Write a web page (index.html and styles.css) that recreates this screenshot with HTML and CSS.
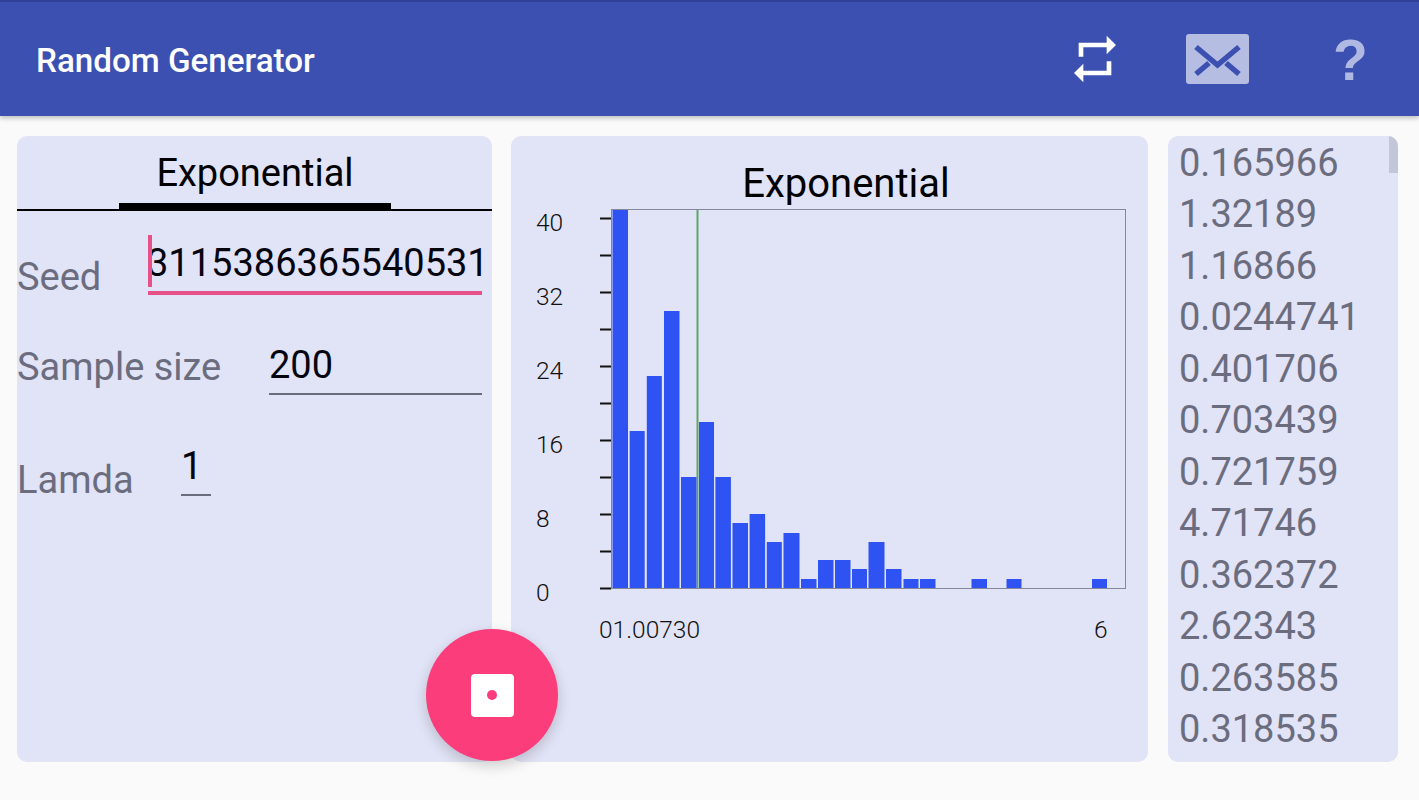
FILE: index.html
```html
<!DOCTYPE html>
<html lang="en">
<head>
    <meta charset="UTF-8">
    <meta name="viewport" content="width=device-width, initial-scale=1.0">
    <title>Random Generator</title>
    <link rel="stylesheet" href="styles.css">
</head>
<body>
    <header class="app-bar">
        <div class="app-title">Random Generator</div>
        <div class="app-actions">
            <svg class="icon-repeat" viewBox="0 0 24 24"><path d="M7 7h10v3l4-4-4-4v3H5v6h2V7zm10 10H7v-3l-4 4 4 4v-3h12v-6h-2v4z"/></svg>
            <svg class="icon-mail" viewBox="0 0 63 50">
                <rect width="63" height="50" rx="3"/>
                <path d="M10 13l21.500 18L53 13M10 40l13-11M53 40L40 29"/>
            </svg>
            <div class="icon-help">?</div>
        </div>
    </header>

    <main class="content">
        <section class="card form-card">
            <div class="tabs">
                <div class="tab">Exponential</div>
            </div>
            <div class="row row-seed">
                <div class="label">Seed</div>
                <div class="field field-focus"><span class="caret"></span><span class="value">3115386365540531</span></div>
            </div>
            <div class="row row-size">
                <div class="label">Sample size</div>
                <div class="field field-size"><span class="value">200</span></div>
            </div>
            <div class="row row-lamda">
                <div class="label">Lamda</div>
                <div class="field field-lamda"><span class="value">1</span></div>
            </div>
        </section>

        <section class="card chart-card">
            <svg class="chart" viewBox="511 136 637 626">
                <text class="chart-title" x="846" y="197">Exponential</text>

                <g class="ticks">
                    <path d="M600 218.500h11M600 255.500h11M600 292.500h11M600 329.500h11M600 366.500h11M600 403.500h11M600 440.500h11M600 477.500h11M600 514.500h11M600 551.500h11M600 588.500h11"/>
                </g>
                <g class="axis-labels">
                    <text x="536" y="231">40</text>
                    <text x="536" y="305">32</text>
                    <text x="536" y="379">24</text>
                    <text x="536" y="453">16</text>
                    <text x="536" y="527">8</text>
                    <text x="536" y="601">0</text>
                    <text x="599" y="638">01.00730</text>
                    <text x="1094" y="638">6</text>
                </g>

                <rect class="plot" x="611.500" y="209.500" width="514" height="379"/>
                <path class="mean" d="M697.500 210v378"/>

                <g class="bars">
                    <rect x="612.500" y="210" width="15.500" height="378"/>
                    <rect x="629.700" y="431" width="15" height="157"/>
                    <rect x="646.800" y="376" width="15" height="212"/>
                    <rect x="664" y="311" width="15.500" height="277"/>
                    <rect x="681" y="477" width="15.500" height="111"/>
                    <rect x="699" y="422" width="15" height="166"/>
                    <rect x="715.400" y="477" width="15.500" height="111"/>
                    <rect x="732.500" y="523" width="15.500" height="65"/>
                    <rect x="749.600" y="514" width="15.500" height="74"/>
                    <rect x="766.800" y="542" width="15" height="46"/>
                    <rect x="783.500" y="533" width="16" height="55"/>
                    <rect x="801" y="579" width="15.500" height="9"/>
                    <rect x="818" y="560" width="15.500" height="28"/>
                    <rect x="835" y="560" width="15.500" height="28"/>
                    <rect x="852" y="569" width="15" height="19"/>
                    <rect x="868.500" y="542" width="16" height="46"/>
                    <rect x="886" y="569" width="15.500" height="19"/>
                    <rect x="903.500" y="579" width="15" height="9"/>
                    <rect x="920" y="579" width="15.500" height="9"/>
                    <rect x="971.500" y="579" width="15.500" height="9"/>
                    <rect x="1006.500" y="579" width="15" height="9"/>
                    <rect x="1092" y="579" width="15" height="9"/>
                </g>
            </svg>
        </section>

        <section class="card list-card">
            <div class="scroll-thumb"></div>
            <div class="list-item">0.165966</div>
            <div class="list-item">1.32189</div>
            <div class="list-item">1.16866</div>
            <div class="list-item">0.0244741</div>
            <div class="list-item">0.401706</div>
            <div class="list-item">0.703439</div>
            <div class="list-item">0.721759</div>
            <div class="list-item">4.71746</div>
            <div class="list-item">0.362372</div>
            <div class="list-item">2.62343</div>
            <div class="list-item">0.263585</div>
            <div class="list-item">0.318535</div>
        </section>
    </main>

    <button class="fab">
        <span class="fab-die"><span class="fab-pip"></span></span>
    </button>
</body>
</html>
```

FILE: styles.css
```css
body {
    font-family: Roboto, "Liberation Sans", sans-serif;
    background-color: #fafafa;
    margin: 0;
    height: 800px;
    overflow: hidden;
    position: relative;
}

.app-bar {
    height: 114px;
    border-top: 2px solid #30409a;
    background-color: #3c50b1;
    box-shadow: 0 2px 5px rgba(0, 0, 0, 0.25);
    display: flex;
    align-items: center;
    justify-content: space-between;
    padding-left: 36px;
}

.app-title {
    font-size: 33.200px;
    font-weight: 500;
    color: #fff;
    margin-top: 2px;
}

.app-actions {
    display: flex;
    align-items: center;
}

.icon-repeat {
    width: 56px;
    height: 56px;
    fill: #fff;
    margin-right: 63px;
}

.icon-mail {
    width: 63px;
    height: 50px;
    margin-right: 84px;
}

.icon-mail rect {
    fill: #b5bde3;
}

.icon-mail path {
    fill: none;
    stroke: #3c50b1;
    stroke-width: 5.500px;
}

.icon-help {
    width: 30px;
    margin-right: 56px;
    font-family: "Liberation Sans", sans-serif;
    font-size: 57px;
    font-weight: 700;
    line-height: 60px;
    color: #b0b9e2;
    margin-top: 1px;
}

.content {
    display: flex;
    padding: 20px 21px 0 17px;
    gap: 19px;
}

.card {
    height: 626px;
    background-color: #e1e3f6;
    border-radius: 10px;
}

.form-card {
    width: 475px;
}

.chart-card {
    width: 637px;
}

.list-card {
    width: 230px;
    margin-left: 1px;
    position: relative;
    overflow: hidden;
    box-sizing: border-box;
    padding: 2px 0 0 11px;
}

.tabs {
    height: 73px;
    border-bottom: 2px solid #000;
    display: flex;
    justify-content: center;
}

.tab {
    width: 272px;
    height: 67px;
    box-sizing: content-box;
    border-bottom: 6px solid #000;
    margin-left: 1px;
    text-align: center;
    font-size: 38px;
    line-height: 75px;
    color: #000;
}

.row {
    display: flex;
    align-items: flex-end;
    font-size: 38px;
    line-height: 44px;
}

.label {
    color: #6b6d7f;
}

.value {
    color: #050510;
    white-space: nowrap;
}

.row-seed {
    margin-top: 24px;
    height: 60px;
}

.row-seed .label {
    width: 131px;
    margin-bottom: -4px;
}

.field-focus {
    width: 334px;
    height: 50px;
    border-bottom: 4px solid #e8508a;
    position: relative;
    display: flex;
    align-items: flex-end;
    padding-bottom: 6px;
}

.field-focus .value {
    margin-left: -1px;
}

.caret {
    position: absolute;
    left: 0;
    top: 0;
    width: 4px;
    height: 52px;
    background-color: #e8508a;
}

.row-size {
    margin-top: 48px;
}

.row-size .label {
    width: 252px;
    margin-bottom: 3px;
}

.field-size {
    width: 213px;
    height: 50px;
    border-bottom: 2px solid #6b6d7d;
    margin-bottom: -3px;
}

.row-lamda {
    margin-top: 52px;
}

.row-lamda .label {
    width: 164px;
    margin-bottom: -9px;
}

.field-lamda {
    width: 30px;
    height: 50px;
    border-bottom: 2px solid #6b6d7d;
    margin-bottom: -3px;
}

.chart {
    display: block;
    width: 637px;
    height: 626px;
    font-family: Roboto, "Liberation Sans", sans-serif;
}

.chart-title {
    font-size: 40px;
    text-anchor: middle;
    fill: #000;
}

.ticks path {
    stroke: #111;
    stroke-width: 2px;
    fill: none;
}

.axis-labels text {
    font-size: 24.500px;
    font-weight: 300;
    fill: #111;
}

.plot {
    fill: none;
    stroke: #85889a;
    stroke-width: 1px;
}

.mean {
    stroke: #5fa56a;
    stroke-width: 2px;
}

.bars rect {
    fill: #2f52f2;
}

.list-item {
    font-size: 38px;
    line-height: 51.450px;
    color: #6b6d7f;
}

.scroll-thumb {
    position: absolute;
    top: 0;
    right: 0;
    width: 9px;
    height: 37px;
    background-color: #c3c6d9;
}

.fab {
    position: absolute;
    left: 426px;
    top: 629px;
    width: 132px;
    height: 132px;
    border: none;
    padding: 0;
    border-radius: 50%;
    background-color: #fb3d7c;
    box-shadow: 0 5px 14px rgba(0, 0, 0, 0.18);
    display: flex;
    align-items: center;
    justify-content: center;
}

.fab-die {
    width: 43px;
    height: 43px;
    border-radius: 4px;
    background-color: #fff;
    display: flex;
    align-items: center;
    justify-content: center;
}

.fab-pip {
    width: 10px;
    height: 10px;
    border-radius: 50%;
    background-color: #fb3d7c;
}
```
